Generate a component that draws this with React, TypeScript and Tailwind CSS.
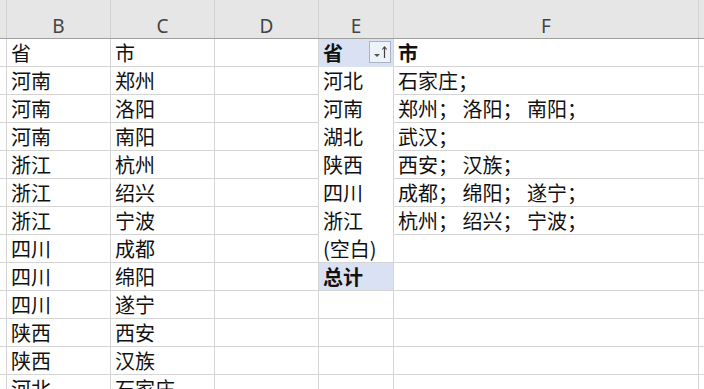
import React from "react";

type Cell = { text?: string; bold?: boolean; fill?: boolean; noBottom?: boolean; filter?: boolean };

// column widths A(sliver) B C D E F G(sliver)
const colW = ["w-[7px]", "w-[104px]", "w-[104px]", "w-[104px]", "w-[75px]", "w-[305px]", "w-[5px]"];
const letters = ["", "B", "C", "D", "E", "F", ""];

const bData: [string, string][] = [
  ["省", "市"],
  ["河南", "郑州"],
  ["河南", "洛阳"],
  ["河南", "南阳"],
  ["浙江", "杭州"],
  ["浙江", "绍兴"],
  ["浙江", "宁波"],
  ["四川", "成都"],
  ["四川", "绵阳"],
  ["四川", "遂宁"],
  ["陕西", "西安"],
  ["陕西", "汉族"],
  ["河北", "石家庄"],
];

const pivotRows = ["河北", "河南", "湖北", "陕西", "四川", "浙江", "(空白)"];
const pivotVals = [
  "石家庄；",
  "郑州； 洛阳； 南阳；",
  "武汉；",
  "西安； 汉族；",
  "成都； 绵阳； 遂宁；",
  "杭州； 绍兴； 宁波；",
  "",
];

function pivotCells(r: number): [Cell, Cell] {
  if (r === 0) return [{ text: "省", bold: true, fill: true, noBottom: true, filter: true }, { text: "市", bold: true }];
  if (r >= 1 && r <= 7)
    return [{ text: pivotRows[r - 1], noBottom: r !== 7 }, { text: pivotVals[r - 1] }];
  if (r === 8) return [{ text: "总计", bold: true, fill: true }, {}];
  return [{}, {}];
}

function FilterButton() {
  return (
    <div className="absolute right-[2px] top-[2px] flex h-[22px] w-[22px] items-center justify-center border border-[#a9b3c4] bg-[#eef2f9]">
      <svg width="18" height="16" viewBox="0 0 18 16">
        <path d="M3 10 L9 10 L6 13 Z" fill="#555" />
        <path d="M13.5 14 V3" stroke="#444" strokeWidth="1.2" />
        <path d="M11.3 5.5 L13.5 2.8 L15.7 5.5" stroke="#444" strokeWidth="1.1" fill="none" />
      </svg>
    </div>
  );
}

function BodyCell({ w, cell, last }: { w: string; cell: Cell; last?: boolean }) {
  return (
    <div
      className={[
        w,
        "relative h-[28px] shrink-0 overflow-visible whitespace-nowrap pl-[4px] text-[20px] leading-[28px] text-[#111]",
        last ? "" : "border-r border-[#d4d4d4]",
        cell.noBottom ? "border-b border-b-transparent" : "border-b border-[#d4d4d4]",
        cell.fill ? "bg-[#d9e1f2]" : "bg-white",
        cell.bold ? "font-bold" : "font-normal",
      ].join(" ")}
    >
      {cell.text}
      {cell.filter && <FilterButton />}
    </div>
  );
}

export default function App() {
  return (
    <div className="h-[389px] w-[704px] overflow-hidden bg-white font-['Noto_Sans_CJK_SC','Noto_Sans',sans-serif]">
      {/* column letters */}
      <div className="flex h-[39px] border-b border-[#9e9e9e] bg-[#e6e6e6]">
        {colW.map((w, i) => (
          <div
            key={i}
            className={[
              w,
              "flex shrink-0 justify-center pt-[15px] font-['Noto_Sans','Liberation_Sans',sans-serif] text-[19px] leading-[22px] text-[#444]",
              i === colW.length - 1 ? "" : "border-r border-[#d2d2d2]",
            ].join(" ")}
          >
            {letters[i]}
          </div>
        ))}
      </div>

      {/* sheet rows */}
      {bData.map(([b, c], r) => {
        const [e, f] = pivotCells(r);
        return (
          <div key={r} className="flex">
            <BodyCell w={colW[0]} cell={{}} />
            <BodyCell w={colW[1]} cell={{ text: b }} />
            <BodyCell w={colW[2]} cell={{ text: c }} />
            <BodyCell w={colW[3]} cell={{}} />
            <BodyCell w={colW[4]} cell={e} />
            <BodyCell w={colW[5]} cell={f} />
            <BodyCell w={colW[6]} cell={{}} last />
          </div>
        );
      })}
    </div>
  );
}
